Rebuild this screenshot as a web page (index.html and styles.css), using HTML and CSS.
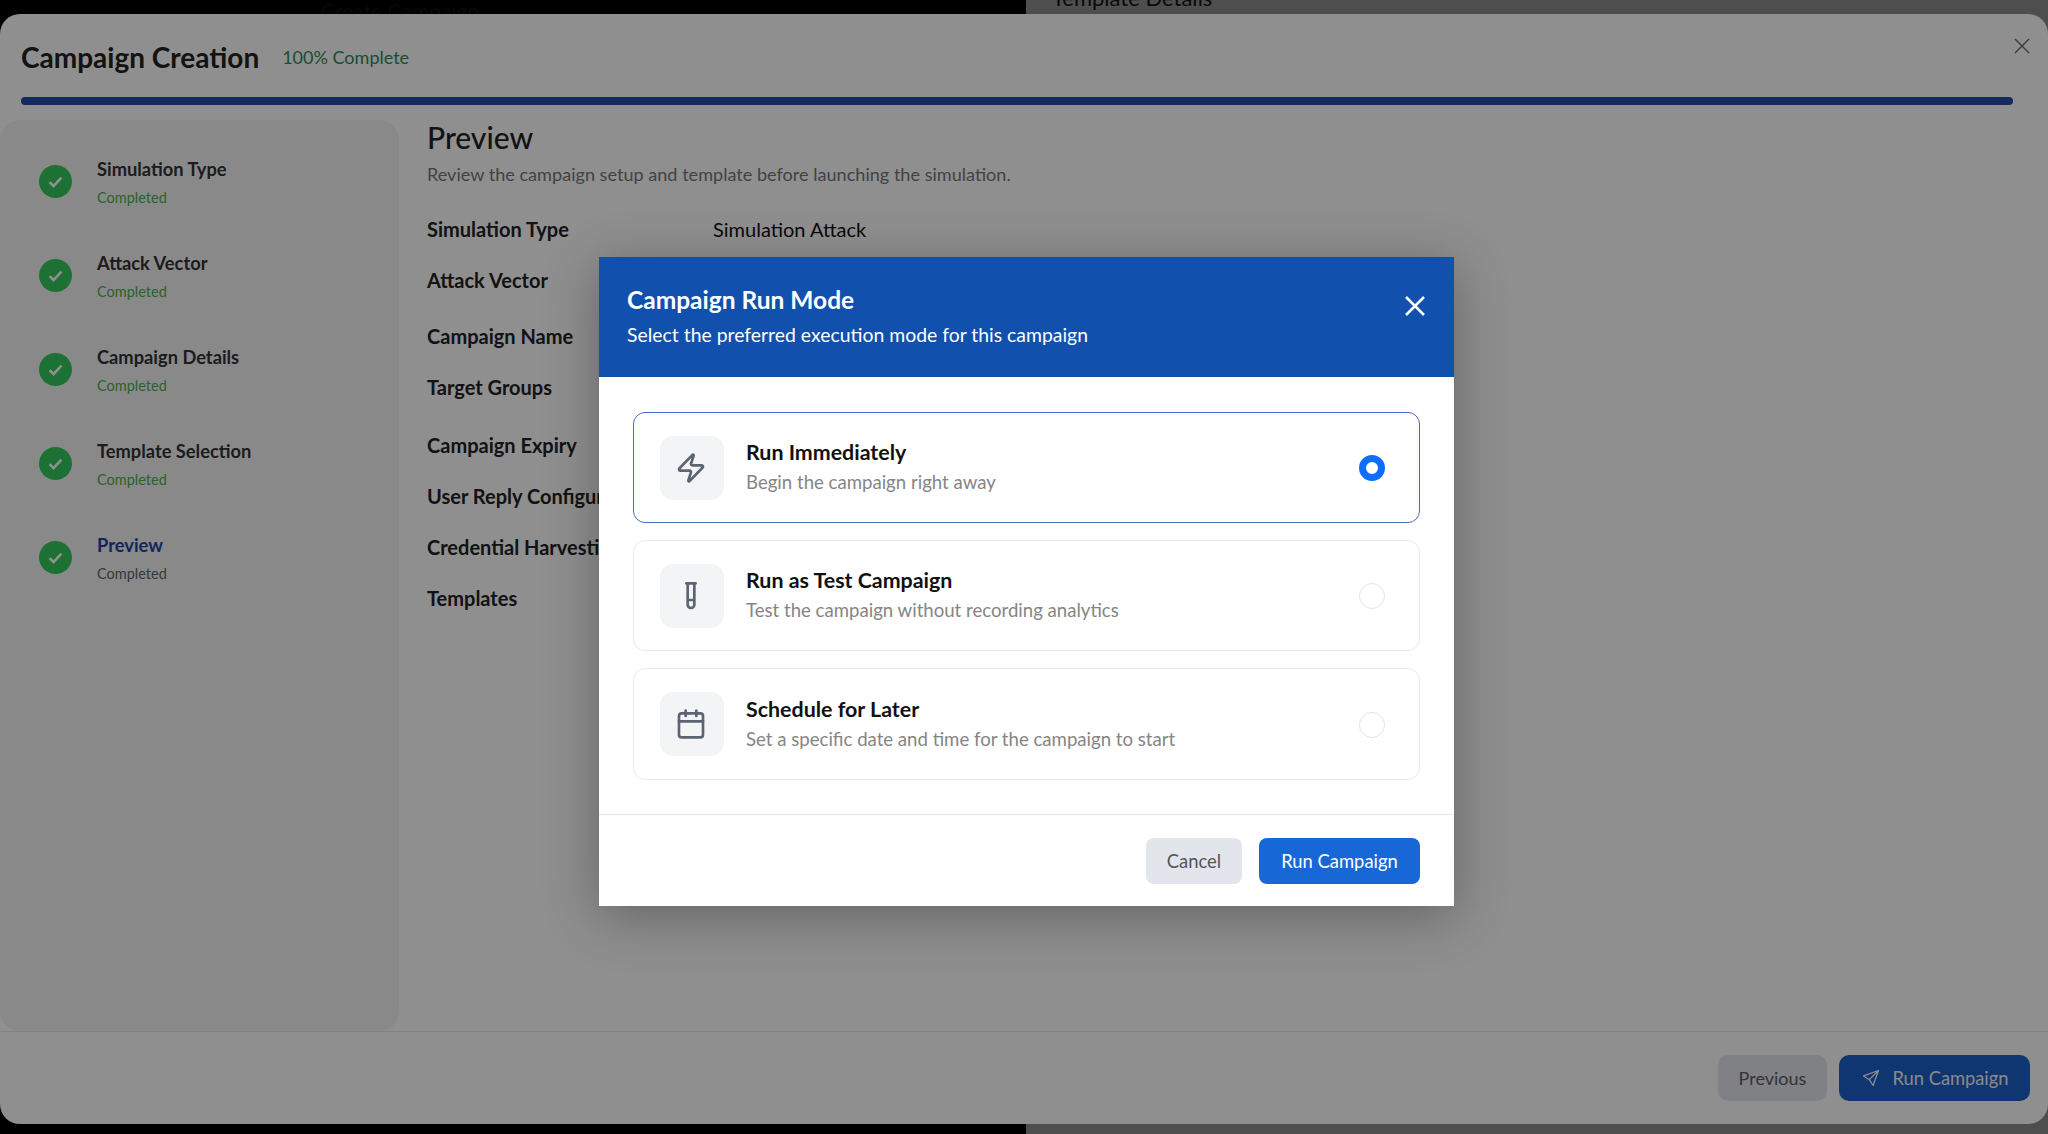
FILE: index.html
```html
<!DOCTYPE html>
<html lang="en">
<head>
<meta charset="utf-8">
<title>Campaign Creation</title>
<link rel="stylesheet" href="styles.css">
</head>
<body>
<div class="page">
  <div class="page-left"><span class="page-left-title">Create Campaign</span></div>
  <div class="page-right"><span class="page-right-title">Template Details</span></div>
</div>

<section class="sheet">
  <header class="sheet-head">
    <div class="sheet-title-row">
      <h1 class="sheet-title">Campaign Creation</h1>
      <span class="sheet-progress">100% Complete</span>
    </div>
    <div class="bar"></div>
  </header>
  <svg class="sheet-close" viewBox="0 0 16 16"><path d="M1 1l14 14M15 1L1 15"/></svg>

  <div class="sheet-main">
    <aside class="steps">
      <div class="step"><span class="step-dot"><svg viewBox="0 0 16 16"><path d="M3.5 8.5l3 3 6-6.500"/></svg></span><div><div class="step-name">Simulation Type</div><div class="step-state">Completed</div></div></div>
      <div class="step"><span class="step-dot"><svg viewBox="0 0 16 16"><path d="M3.5 8.5l3 3 6-6.500"/></svg></span><div><div class="step-name">Attack Vector</div><div class="step-state">Completed</div></div></div>
      <div class="step"><span class="step-dot"><svg viewBox="0 0 16 16"><path d="M3.5 8.5l3 3 6-6.500"/></svg></span><div><div class="step-name">Campaign Details</div><div class="step-state">Completed</div></div></div>
      <div class="step"><span class="step-dot"><svg viewBox="0 0 16 16"><path d="M3.5 8.5l3 3 6-6.500"/></svg></span><div><div class="step-name">Template Selection</div><div class="step-state">Completed</div></div></div>
      <div class="step step-current"><span class="step-dot"><svg viewBox="0 0 16 16"><path d="M3.5 8.5l3 3 6-6.500"/></svg></span><div><div class="step-name">Preview</div><div class="step-state">Completed</div></div></div>
    </aside>
    <main class="review">
      <h2 class="review-title">Preview</h2>
      <p class="review-sub">Review the campaign setup and template before launching the simulation.</p>
      <div class="rows">
        <div class="row"><span class="row-label">Simulation Type</span><span class="row-value">Simulation Attack</span></div>
        <div class="row row-mid"><span class="row-label">Attack Vector</span></div>
        <div class="row"><span class="row-label">Campaign Name</span></div>
        <div class="row row-tall"><span class="row-label">Target Groups</span></div>
        <div class="row"><span class="row-label">Campaign Expiry</span></div>
        <div class="row"><span class="row-label">User Reply Configuration</span></div>
        <div class="row"><span class="row-label">Credential Harvesting</span></div>
        <div class="row"><span class="row-label">Templates</span></div>
      </div>
    </main>
  </div>

  <footer class="sheet-foot">
    <button class="btn btn-prev">Previous</button>
    <button class="btn btn-run">
      <svg viewBox="0 0 24 24"><path d="M21 3L10 14M21 3L3 9.500l7 4.500 4.500 7z"/></svg>
      Run Campaign
    </button>
  </footer>
</section>

<div class="scrim"></div>

<div class="dialog">
  <div class="dialog-head">
    <div>
      <div class="dialog-title">Campaign Run Mode</div>
      <div class="dialog-sub">Select the preferred execution mode for this campaign</div>
    </div>
    <svg class="dialog-close" viewBox="0 0 16 16"><path d="M2 2l12 12M14 2L2 14"/></svg>
  </div>
  <div class="dialog-body">
    <div class="option option-on">
      <span class="option-icon"><svg viewBox="0 0 24 24"><path d="M4 14a1 1 0 0 1-.78-1.630l9.900-10.200a.5.5 0 0 1 .86.46l-1.920 6.020A1 1 0 0 0 13 10h7a1 1 0 0 1 .78 1.630l-9.900 10.200a.5.5 0 0 1-.86-.46l1.920-6.020A1 1 0 0 0 11 14z"/></svg></span>
      <div class="option-text"><div class="option-name">Run Immediately</div><div class="option-desc">Begin the campaign right away</div></div>
      <span class="radio radio-on"></span>
    </div>
    <div class="option">
      <span class="option-icon"><svg viewBox="0 0 24 24"><path d="M8.500 2.500h7M9.500 2.500v16a2.500 2.500 0 0 0 5 0v-16M9.500 15h5"/></svg></span>
      <div class="option-text"><div class="option-name">Run as Test Campaign</div><div class="option-desc">Test the campaign without recording analytics</div></div>
      <span class="radio"></span>
    </div>
    <div class="option option-last">
      <span class="option-icon"><svg viewBox="0 0 24 24"><rect x="3" y="4" width="18" height="18" rx="2"/><path d="M8 2v4M16 2v4M3 10h18"/></svg></span>
      <div class="option-text"><div class="option-name">Schedule for Later</div><div class="option-desc">Set a specific date and time for the campaign to start</div></div>
      <span class="radio"></span>
    </div>
  </div>
  <div class="dialog-foot">
    <button class="btn-d btn-cancel">Cancel</button>
    <button class="btn-d btn-confirm">Run Campaign</button>
  </div>
</div>
</body>
</html>
```

FILE: styles.css
```css
* { box-sizing: border-box; }
html, body { margin: 0; height: 100%; }
body { position: relative; overflow: hidden; width: 2048px; height: 1134px; font-family: "Lato", "Noto Sans", sans-serif; background: #000; color: #222; }
h1, h2, p { margin: 0; }
button { font: inherit; border: 0; }

.page { display: flex; height: 100%; }
.page-left { width: 1026px; background: #000; overflow: hidden; }
.page-left-title { display: block; margin: 0 0 0 321px; font-size: 21px; line-height: 22px; color: #0e0e0e; }
.page-right { flex: 1; background: #8c8c8c; overflow: hidden; }
.page-right-title { display: block; margin: -16px 0 0 26px; font-size: 22px; color: #111; }

.sheet { position: absolute; left: 0; right: 0; top: 14px; bottom: 10px; display: flex; flex-direction: column; background: #fff; border-radius: 20px; }
.sheet-head { padding: 24px 8px 0 21px; }
.sheet-title-row { display: flex; align-items: center; gap: 23px; height: 40px; }
.sheet-title { font-size: 28px; line-height: 38px; margin-top: -2px; font-weight: 700; color: #222; }
.sheet-progress { font-size: 18px; margin-top: -2px; color: #2f8a5c; }
.bar { height: 8px; margin: 19px 27px 0 0; border-radius: 4px; background: #294ba8; }
.sheet-close { position: absolute; right: 18px; top: 24px; width: 16px; height: 16px; fill: none; stroke: #666; stroke-width: 1.400; }

.sheet-main { flex: 1; display: flex; margin-top: 15px; min-height: 0; }
.steps { width: 399px; padding: 37px 0 0 39px; display: flex; flex-direction: column; gap: 43px; background: #f5f5f7; border-radius: 20px; }
.step { display: flex; align-items: center; gap: 25px; }
.step-dot { width: 33px; height: 33px; margin-top: -2px; border-radius: 50%; background: #37c95e; display: flex; align-items: center; justify-content: center; }
.step-dot svg { width: 21px; height: 21px; fill: none; stroke: #fff; stroke-width: 2; }
.step-name { font-size: 18.300px; line-height: 24px; font-weight: 700; color: #333; }
.step-state { margin-top: 7px; font-size: 14.500px; line-height: 20px; color: #4bb04b; }
.step-current .step-name { color: #2343a5; }
.step-current .step-state { color: #666; }

.review { flex: 1; padding-left: 28px; }
.review-title { font-size: 30px; line-height: 36px; margin-top: -1px; font-weight: 500; color: #222; }
.review-sub { margin-top: 8px; font-size: 18.100px; line-height: 22px; color: #777; }
.rows { margin-top: 32px; }
.row { display: flex; height: 51px; font-size: 20px; line-height: 24px; }
.row-mid { height: 56px; }
.row-tall { height: 58px; }
.row-label { width: 286px; font-weight: 700; color: #222; }
.row-value { color: #111; }

.sheet-foot { height: 93px; flex: none; display: flex; justify-content: flex-end; align-items: flex-start; gap: 12px; padding: 23px 18px 0 0; border-top: 1px solid #e6e6ea; }
.btn { height: 46px; border-radius: 10px; font-size: 18px; }
.btn-prev { width: 109px; background: #e4e6ec; color: #5c5c5c; }
.btn-run { width: 191px; background: #1c60c8; color: #f4f4f4; font-size: 18.300px; display: flex; align-items: center; justify-content: center; gap: 12px; padding-right: 6px; }
.btn-run svg { width: 20px; height: 20px; fill: none; stroke: #fff; stroke-width: 1.500; stroke-linejoin: round; stroke-linecap: round; }

.scrim { position: absolute; inset: 0; background: rgba(0, 0, 0, 0.44); }

.dialog { position: absolute; left: 599px; top: 257px; width: 855px; height: 649px; display: flex; flex-direction: column; background: #fff; box-shadow: 0 10px 50px rgba(0, 0, 0, 0.3); }
.dialog-head { height: 120px; flex: none; display: flex; justify-content: space-between; align-items: center; padding: 0 27px 0 28px; background: #1150ad; color: #fff; }
.dialog-title { font-size: 24.500px; line-height: 30px; margin-top: -3px; font-weight: 700; }
.dialog-sub { margin-top: 8px; font-size: 19.400px; line-height: 24px; }
.dialog-close { width: 24px; height: 24px; margin-top: -22px; fill: none; stroke: #fff; stroke-width: 1.700; }
.dialog-body { height: 437px; flex: none; display: flex; flex-direction: column; gap: 17px; padding: 35px 34px 0; }
.option { height: 111px; flex: none; display: flex; align-items: center; gap: 22px; padding: 0 34px 0 26px; border: 1px solid #e6e7ee; border-radius: 12px; }
.option-on { border-color: #4a6cc0; }
.option-last { height: 112px; }
.option-icon { width: 64px; height: 64px; flex: none; display: flex; align-items: center; justify-content: center; background: #f3f4f6; border-radius: 14px; }
.option-icon svg { width: 32px; height: 32px; margin-left: -2px; fill: none; stroke: #5b6473; stroke-width: 2; stroke-linecap: round; stroke-linejoin: round; }
.option-text { flex: 1; }
.option-name { font-size: 21.400px; line-height: 26px; margin-top: -2px; font-weight: 700; color: #111; }
.option-desc { margin-top: 5px; font-size: 18.600px; line-height: 24px; color: #858585; }
.radio { width: 26px; height: 26px; margin-top: 1px; border: 1px solid #e4e4e8; border-radius: 50%; }
.radio-on { border: 7px solid #0d6efd; }
.dialog-foot { height: 92px; flex: none; display: flex; justify-content: flex-end; align-items: flex-start; gap: 17px; padding: 23px 34px 0 0; border-top: 1px solid #e6e7ee; }
.btn-d { height: 46px; border-radius: 8px; font-size: 18.400px; }
.btn-cancel { width: 96px; background: #e2e5ec; color: #555; }
.btn-confirm { width: 161px; background: #1768d6; color: #fff; }
```
